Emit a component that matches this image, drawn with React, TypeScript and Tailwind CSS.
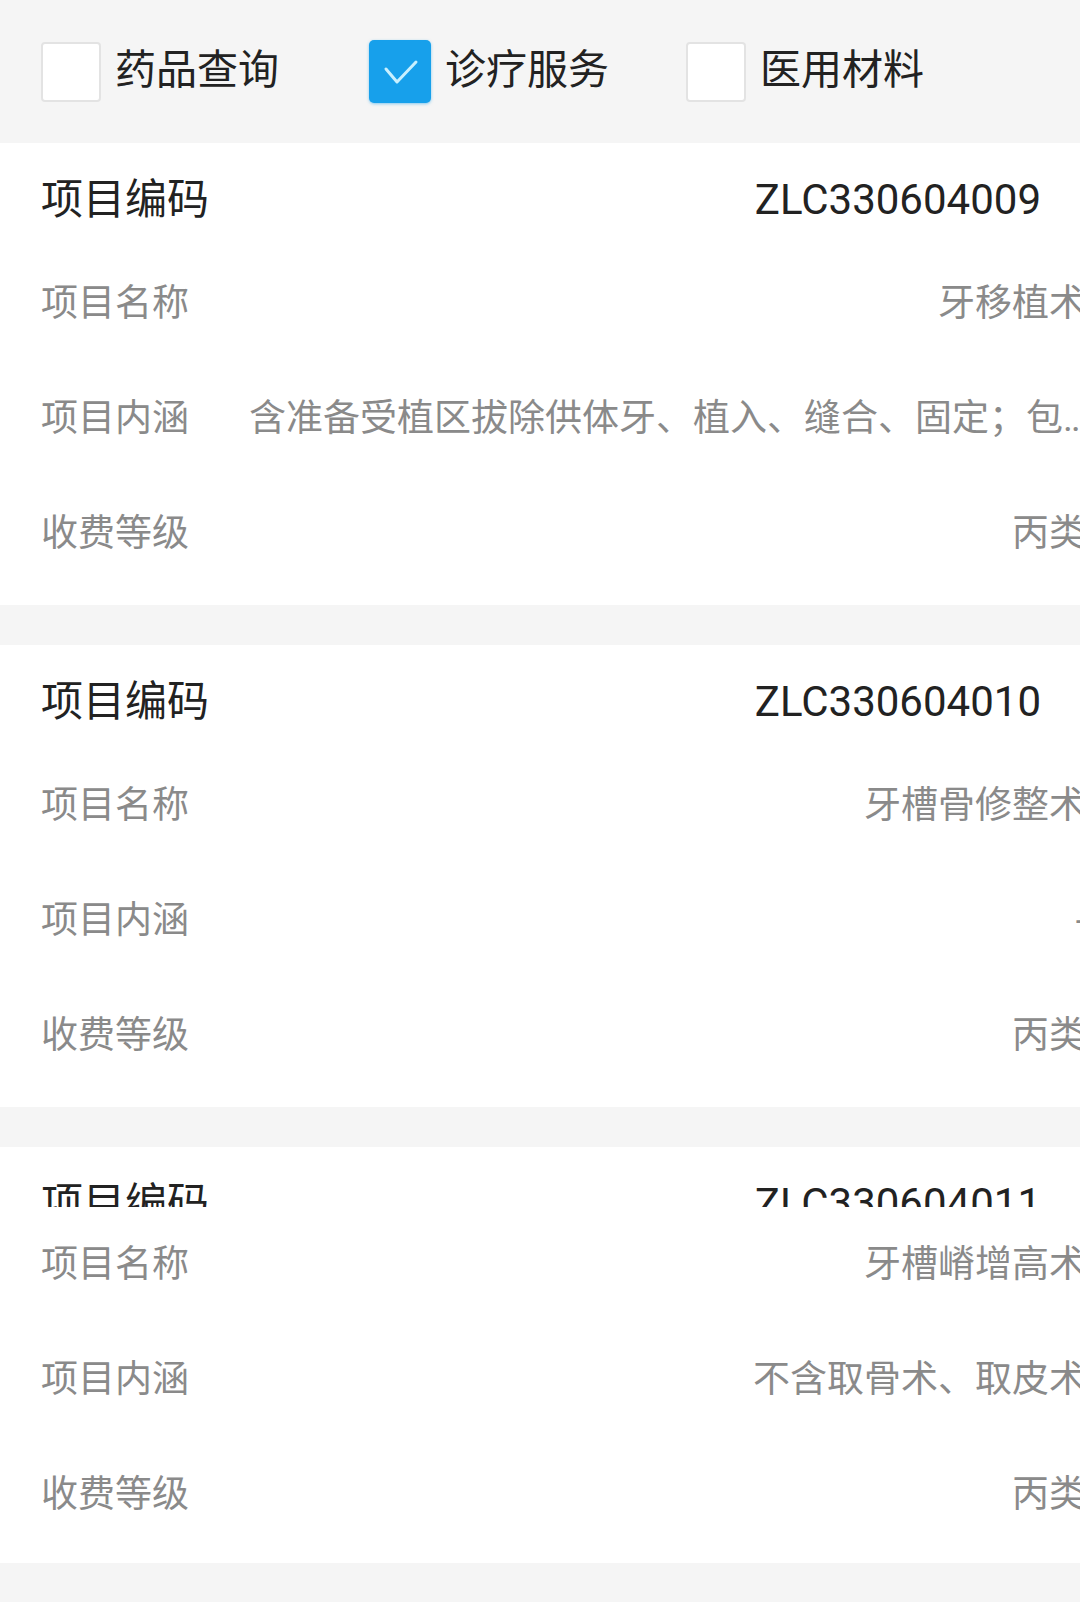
import { useState } from "react";

const font = "font-['Roboto','Noto_Sans_CJK_SC',sans-serif]";

const tabs = [
  { key: "drug", label: "药品查询", gap: "ml-[41px]" },
  { key: "service", label: "诊疗服务", gap: "ml-[90px]" },
  { key: "material", label: "医用材料", gap: "ml-[77px]" },
];

type Item = {
  code: string;
  name: string;
  desc: string;
  level: string;
  clipped?: boolean;
};

const items: Item[] = [
  {
    code: "ZLC330604009",
    name: "牙移植术",
    desc: "含准备受植区拔除供体牙、植入、缝合、固定；包括自体牙移植与异体牙移植",
    level: "丙类",
  },
  {
    code: "ZLC330604010",
    name: "牙槽骨修整术",
    desc: "-",
    level: "丙类",
  },
  {
    code: "ZLC330604011",
    name: "牙槽嵴增高术",
    desc: "不含取骨术、取皮术",
    level: "丙类",
    clipped: true,
  },
];

function Checkbox({ checked }: { checked: boolean }) {
  if (checked) {
    return (
      <div className="w-[62px] h-[63px] rounded-[5px] bg-[#17a0eb] flex items-center justify-center shrink-0 shadow-[0_1px_3px_rgba(23,160,235,0.5)]">
        <svg width="40" height="30" viewBox="0 0 40 30">
          <polyline
            points="6,12 17,25 36,5"
            fill="none"
            stroke="#c8f0ff"
            strokeWidth="3"
            strokeLinecap="round"
            strokeLinejoin="round"
          />
        </svg>
      </div>
    );
  }
  return (
    <div className="w-[60px] h-[60px] rounded-[4px] bg-white border-2 border-[#e3e3e3] shrink-0" />
  );
}

function Row({ label, value, desc }: { label: string; value: string; desc?: boolean }) {
  // long descriptions run past the screen edge before the ellipsis
  const long = desc && value.length > 20;
  return (
    <div className="h-[115px] flex items-center pl-[41px]">
      <span className="w-[148px] shrink-0 text-[37px] text-[#8a8a8a] whitespace-nowrap">
        {label}
      </span>
      <span
        className={`flex-1 min-w-0 text-[37px] text-[#8a8a8a] whitespace-nowrap overflow-hidden text-ellipsis text-right ${
          desc ? "ml-[60px]" : ""
        } ${long ? "-mr-[24px]" : "-mr-[6px]"}`}
      >
        {value}
      </span>
    </div>
  );
}

function Card({ item }: { item: Item }) {
  const header = (
    <div className="h-[103px] pt-[9px] flex items-center justify-between pl-[41px] pr-[39px] text-[42px] text-[#222]">
      <span>项目编码</span>
      <span>{item.code}</span>
    </div>
  );
  return (
    <div className={`bg-white overflow-hidden ${item.clipped ? "pb-[11px]" : "pb-[14px]"}`}>
      {item.clipped ? <div className="h-[60px] overflow-hidden">{header}</div> : header}
      <Row label="项目名称" value={item.name} />
      <Row label="项目内涵" value={item.desc} desc />
      <Row label="收费等级" value={item.level} />
    </div>
  );
}

export default function App() {
  const [active, setActive] = useState("service");

  return (
    <div className={`w-[1080px] min-h-[1602px] bg-[#f5f5f5] overflow-hidden ${font}`}>
      {/* filter tabs */}
      <div className="h-[143px] flex items-center">
        {tabs.map((t) => (
          <button
            key={t.key}
            onClick={() => setActive(t.key)}
            className={`flex items-center gap-[14px] ${t.gap}`}
          >
            <Checkbox checked={active === t.key} />
            <span className="text-[41px] text-[#222] leading-none -mt-[3px]">{t.label}</span>
          </button>
        ))}
      </div>

      {/* result list */}
      <div className="flex flex-col gap-[40px]">
        {items.map((item) => (
          <Card key={item.code} item={item} />
        ))}
      </div>
    </div>
  );
}
